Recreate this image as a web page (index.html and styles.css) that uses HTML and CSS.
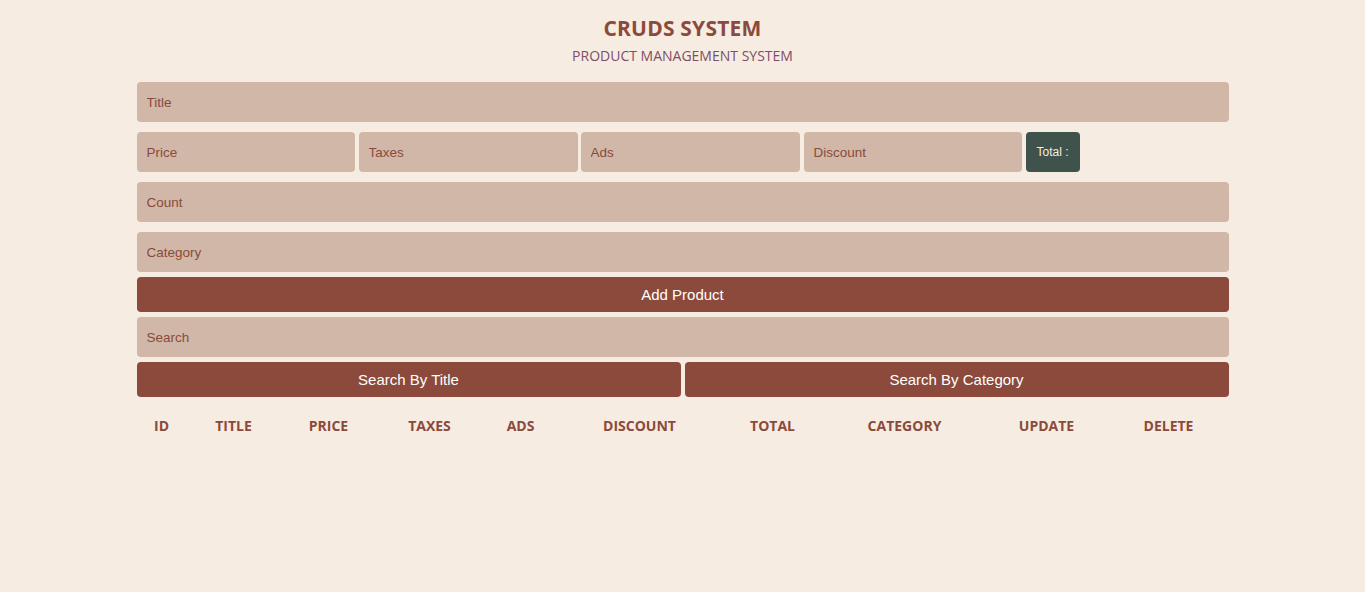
FILE: index.html
```html
<!DOCTYPE html>
<html lang="en">
<head>
<meta charset="UTF-8">
<title>CRUDS</title>
<link rel="stylesheet" href="styles.css">
</head>
<body>
<div class="crud">
  <header class="head">
    <h2 class="head-title">CRUDS SYSTEM</h2>
    <p class="head-sub">PRODUCT MANAGEMENT SYSTEM</p>
  </header>
  <div class="inputs">
    <input class="field" type="text" placeholder="Title">
    <div class="price-row">
      <input class="field small" type="number" placeholder="Price">
      <input class="field small" type="number" placeholder="Taxes">
      <input class="field small" type="number" placeholder="Ads">
      <input class="field small" type="number" placeholder="Discount">
      <small class="total">Total :</small>
    </div>
    <input class="field" type="number" placeholder="Count">
    <input class="field" type="text" placeholder="Category">
    <button class="btn btn-create">Add Product</button>
  </div>
  <div class="search-block">
    <input class="field" type="text" placeholder="Search">
    <div class="btn-search">
      <button class="btn">Search By Title</button>
      <button class="btn">Search By Category</button>
    </div>
  </div>
  <table class="outputs">
    <colgroup>
      <col style="width:50px"><col style="width:94px"><col style="width:96px"><col style="width:106px"><col style="width:76px">
      <col style="width:162px"><col style="width:104px"><col style="width:160px"><col style="width:124px"><col style="width:120px">
    </colgroup>
    <thead>
      <tr>
        <th>ID</th><th>TITLE</th><th>PRICE</th><th>TAXES</th><th>ADS</th>
        <th>DISCOUNT</th><th>TOTAL</th><th>CATEGORY</th><th>UPDATE</th><th>DELETE</th>
      </tr>
    </thead>
    <tbody></tbody>
  </table>
</div>
</body>
</html>
```
FILE: styles.css
```css
* { box-sizing: border-box; }
html, body { margin: 0; padding: 0; }
body {
  background: #f6ece2;
  font-family: "Liberation Sans", Arial, sans-serif;
  color: #8b4a3b;
}
.crud {
  width: 80%;
  margin: 0 auto;
}
.head {
  text-align: center;
  padding-top: 14px;
}
.head-title {
  margin: 0;
  font-family: "Open Sans", sans-serif;
  font-weight: 700;
  font-size: 21px;
  line-height: 28px;
  color: #8b4a3b;
  letter-spacing: 0.2px;
}
.head-sub {
  margin: 6px 0 0;
  font-family: "Open Sans", sans-serif;
  font-size: 14px;
  line-height: 16px;
  color: #7d4e68;
}
.inputs {
  margin-top: 18px;
  display: flex;
  flex-direction: column;
}
.field {
  display: block;
  width: 100%;
  height: 40px;
  border: none;
  outline: none;
  border-radius: 4px;
  background: #d0b7a7;
  padding: 0 10px;
  font-family: "Liberation Sans", Arial, sans-serif;
  font-size: 13.5px;
  color: #8b4a3b;
  margin-bottom: 10px;
}
.field::placeholder { color: #8b4a3b; opacity: 1; }
.price-row {
  display: flex;
  align-items: center;
  margin-bottom: 10px;
}
.price-row .field.small {
  width: 218px;
  margin: 0 4px 0 0;
}
.price-row .field.small:nth-child(2) { width: 219px; margin-right: 3px; }
.price-row .field.small:nth-child(3) { width: 219px; }
.total {
  display: flex;
  align-items: center;
  height: 40px;
  padding: 0 11px;
  border-radius: 4px;
  background: #3f524b;
  color: #f6ece2;
  font-size: 12px;
}
.btn {
  display: block;
  width: 100%;
  height: 35px;
  border: none;
  border-radius: 4px;
  background: #8b4a3b;
  color: #fff;
  font-family: "Liberation Sans", Arial, sans-serif;
  font-size: 15px;
  cursor: pointer;
}
.btn-create { margin-top: -5px; }
.search-block { margin-top: 5px; }
.search-block .field { margin-bottom: 5px; }
.btn-search {
  display: flex;
  gap: 4px;
}
.outputs {
  width: 100%;
  table-layout: fixed;
  border-collapse: collapse;
  margin-top: 14px;
}
.outputs th {
  font-family: "Open Sans", sans-serif;
  font-weight: 700;
  font-size: 14px;
  color: #8b4a3b;
  padding: 5px 0;
  text-align: center;
}
```
